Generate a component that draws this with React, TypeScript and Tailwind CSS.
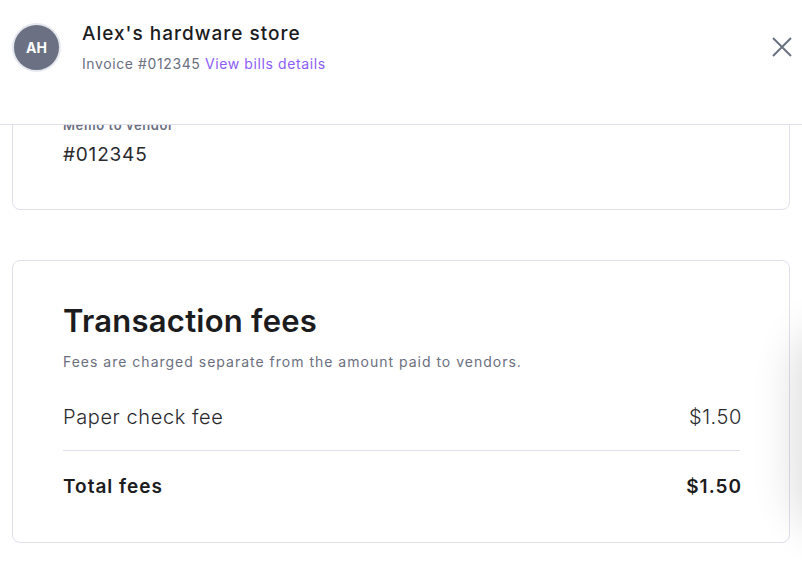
import React from "react";

export default function App() {
  const font = { fontFamily: "Inter, 'Noto Sans', sans-serif" };
  return (
    <div className="relative w-[802px] h-[564px] overflow-hidden bg-white" style={font}>
      <header className="relative z-10 h-[125px] bg-white border-b border-[#dfe0ec] flex items-start">
        <div className="mt-[23px] ml-[12px] w-[49px] h-[49px] rounded-full bg-[#6b7183] border-2 border-[#e6e8ef] flex items-center justify-center">
          <span className="text-white text-[14px] font-bold">AH</span>
        </div>
        <div className="ml-[21px] mt-[21px] flex flex-col">
          <div className="text-[19px] leading-[26px] font-medium text-[#1c1c1e] tracking-[1px]">Alex's hardware store</div>
          <div className="mt-[7px] text-[14px] leading-[20px] text-[#6b6f80] tracking-[0.6px]">
            Invoice #012345 <span className="text-[#8b5cf6]">View bills details</span>
          </div>
        </div>
        <button className="ml-auto mr-[10px] mt-[37px] w-[20px] h-[20px] text-[#6b7280]">
          <svg viewBox="0 0 20 20" width="20" height="20" fill="none" stroke="currentColor" strokeWidth="2">
            <path d="M1 1 L19 19 M19 1 L1 19" />
          </svg>
        </button>
      </header>

      <main className="relative px-[12px] flex flex-col gap-[50px] -mt-[30px]">
        <section className="border border-[#dfe0ec] rounded-[8px] pt-[20px] pb-[42px] px-[50px]">
          <div className="text-[13px] leading-[18px] font-semibold text-[#6b6f80] tracking-[0.6px]">Memo to vendor</div>
          <div className="mt-[9px] text-[19px] leading-[24px] text-[#2a2a2e] tracking-[0.8px]">#012345</div>
        </section>

        <section className="border border-[#dfe0ec] rounded-[8px] pt-[40px] pb-[42px] pl-[50px] pr-[49px]">
          <h2 className="text-[31px] leading-[40px] font-semibold text-[#1c1c1e] tracking-[0.25px]">Transaction fees</h2>
          <p className="mt-[11px] text-[14px] leading-[20px] text-[#6b6f80] tracking-[1px]">
            Fees are charged separate from the amount paid to vendors.
          </p>
          <div className="mt-[32px] flex justify-between items-center text-[20px] leading-[26px] font-light text-[#2a2a2e] tracking-[0.6px]">
            <span>Paper check fee</span>
            <span className="-mr-[2px]">$1.50</span>
          </div>
          <div className="mt-[20px] border-t border-[#dfe0ec]" />
          <div className="mt-[23px] flex justify-between items-center text-[19px] leading-[26px] font-semibold text-[#1c1c1e] tracking-[1px]">
            <span>Total fees</span>
            <span className="-mr-[2px]">$1.50</span>
          </div>
        </section>
      </main>

      <div className="absolute left-[805px] top-[335px] w-[80px] h-[190px] rounded-full shadow-[0_0_40px_14px_rgba(0,0,0,0.12)]" />
    </div>
  );
}
